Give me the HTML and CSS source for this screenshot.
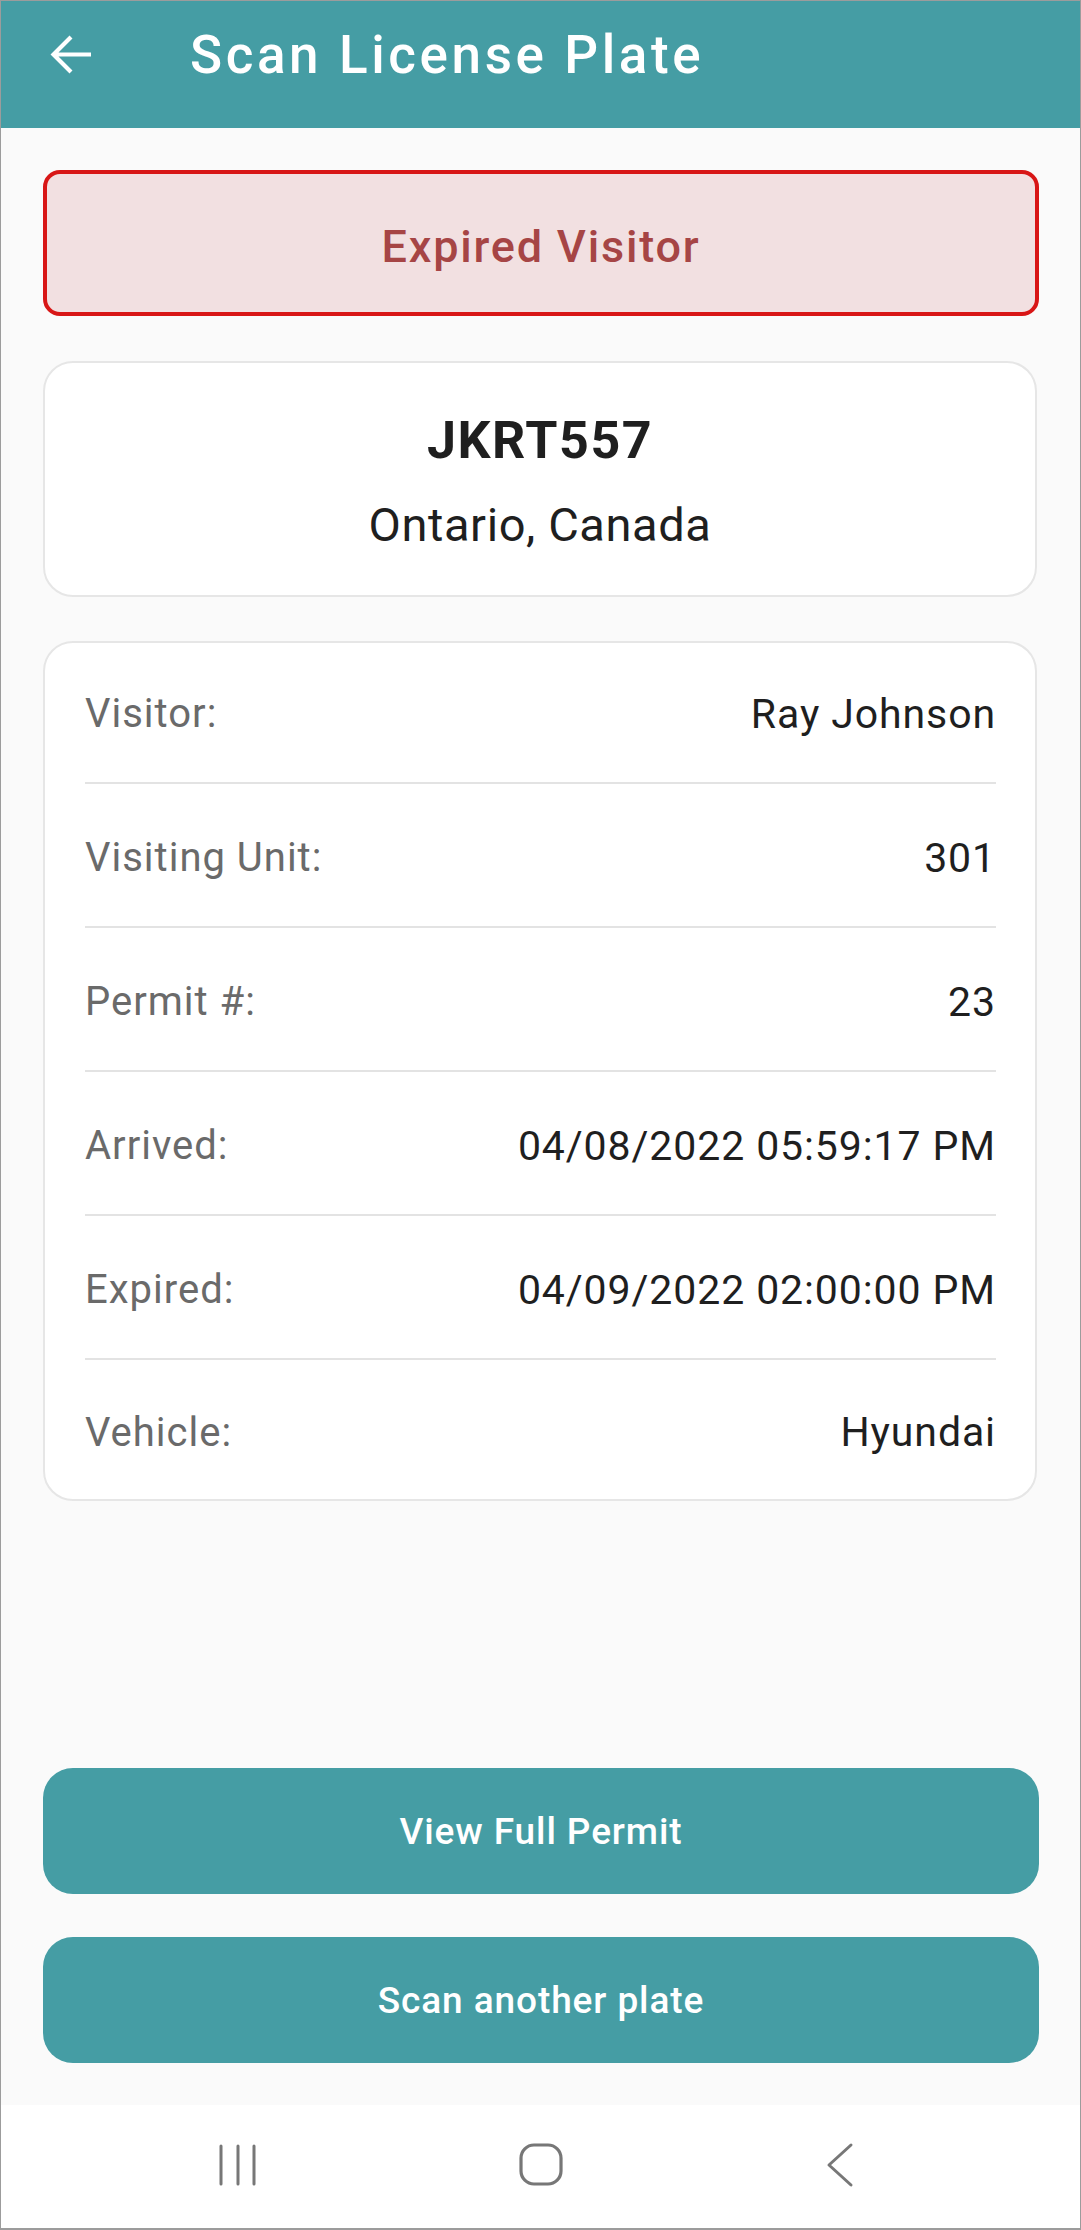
FILE: index.html
```html
<html>
<head>
    <link rel="stylesheet" href="styles.css">
</head>
<body>
    <div class="screen">
        <div class="topbar">
            <svg class="back" width="44" height="44" viewBox="0 0 44 44">
                <path d="M41 21.5H4M21 4L3.5 21.5L21 39" fill="none" stroke="#fff" stroke-width="4.2"/>
            </svg>
            <h1>Scan License Plate</h1>
        </div>

        <div class="content">
            <div class="status">Expired Visitor</div>

            <div class="card plate">
                <div class="plate-number">JKRT557</div>
                <div class="plate-region">Ontario, Canada</div>
            </div>

            <div class="card details">
                <div class="row"><span class="label">Visitor:</span><span class="value">Ray Johnson</span></div>
                <div class="row"><span class="label">Visiting Unit:</span><span class="value">301</span></div>
                <div class="row"><span class="label">Permit #:</span><span class="value">23</span></div>
                <div class="row"><span class="label">Arrived:</span><span class="value">04/08/2022 05:59:17 PM</span></div>
                <div class="row"><span class="label">Expired:</span><span class="value">04/09/2022 02:00:00 PM</span></div>
                <div class="row"><span class="label">Vehicle:</span><span class="value">Hyundai</span></div>
            </div>

            <div class="actions">
                <button class="btn">View Full Permit</button>
                <button class="btn">Scan another plate</button>
            </div>
        </div>

        <div class="navbar">
            <svg width="40" height="44" viewBox="0 0 40 44">
                <path d="M3 3V41M20 3V41M36 3V41" stroke="#777" stroke-width="3" stroke-linecap="round"/>
            </svg>
            <svg width="48" height="46" viewBox="0 0 48 46">
                <rect x="4" y="3" width="40" height="39" rx="13" fill="none" stroke="#777" stroke-width="3.2"/>
            </svg>
            <svg width="32" height="46" viewBox="0 0 32 46">
                <path d="M26 3L4 23L26 43" fill="none" stroke="#777" stroke-width="3" stroke-linecap="round" stroke-linejoin="round"/>
            </svg>
        </div>
    </div>
</body>
</html>
```

FILE: styles.css
```css
* {
    box-sizing: border-box;
}
body {
    margin: 0;
    font-family: Roboto, "Liberation Sans", sans-serif;
    color: #1f1f1f;
}
.screen {
    display: flex;
    flex-direction: column;
    height: 2230px;
    background-color: #fafafa;
    border: 1px solid #9c9c9c;
    border-bottom-width: 2px;
}
.topbar {
    display: flex;
    align-items: center;
    height: 127px;
    padding: 0 0 20px 49px;
    background-color: #459da4;
}
.topbar h1 {
    margin: 0 0 0 96px;
    color: #fff;
    font-size: 53px;
    font-weight: 500;
    letter-spacing: 3.6px;
}
.content {
    flex: 1;
    display: flex;
    flex-direction: column;
    padding: 42px 41px 42px 42px;
}
.status {
    height: 146px;
    display: flex;
    align-items: center;
    justify-content: center;
    padding-top: 7px;
    background-color: #f2e0e1;
    border: 4px solid #d81616;
    border-radius: 17px;
    color: #a64545;
    font-size: 45px;
    font-weight: 500;
    letter-spacing: 1.8px;
}
.card {
    background-color: #fff;
    border: 2px solid #e6e6e6;
    border-radius: 30px;
    width: 994px;
}
.plate {
    margin-top: 45px;
    height: 236px;
    display: flex;
    flex-direction: column;
    align-items: center;
    justify-content: center;
    gap: 34px;
    padding-top: 4px;
}
.plate-number {
    font-size: 52px;
    font-weight: 700;
    letter-spacing: 1.5px;
    line-height: 1;
}
.plate-region {
    font-size: 47px;
    line-height: 1;
    letter-spacing: 0.6px;
}
.details {
    margin-top: 44px;
    padding: 0 39px 0 40px;
}
.row {
    display: flex;
    justify-content: space-between;
    align-items: center;
    height: 144px;
    padding-top: 5px;
    border-bottom: 2px solid #e3e3e3;
    font-size: 40px;
}
.row:first-child {
    height: 141px;
    padding-top: 2px;
}
.row:last-child {
    border-bottom: none;
    height: 139px;
}
.label {
    color: #6a6a6a;
    letter-spacing: 1px;
}
.value {
    color: #1f1f1f;
    font-size: 41px;
    letter-spacing: 0.9px;
}
.actions {
    margin-top: auto;
    display: flex;
    flex-direction: column;
    gap: 43px;
}
.btn {
    height: 126px;
    width: 996px;
    border: none;
    border-radius: 30px;
    background-color: #459da4;
    color: #fff;
    font-family: Roboto, "Liberation Sans", sans-serif;
    font-size: 37px;
    font-weight: 500;
    letter-spacing: 0.9px;
}
.navbar {
    height: 123px;
    background-color: #fff;
    display: flex;
    align-items: center;
    padding-bottom: 4px;
}
.navbar svg:nth-child(1) {
    margin-left: 217px;
}
.navbar svg:nth-child(2) {
    margin-left: 259px;
}
.navbar svg:nth-child(3) {
    margin-left: 260px;
}
```
